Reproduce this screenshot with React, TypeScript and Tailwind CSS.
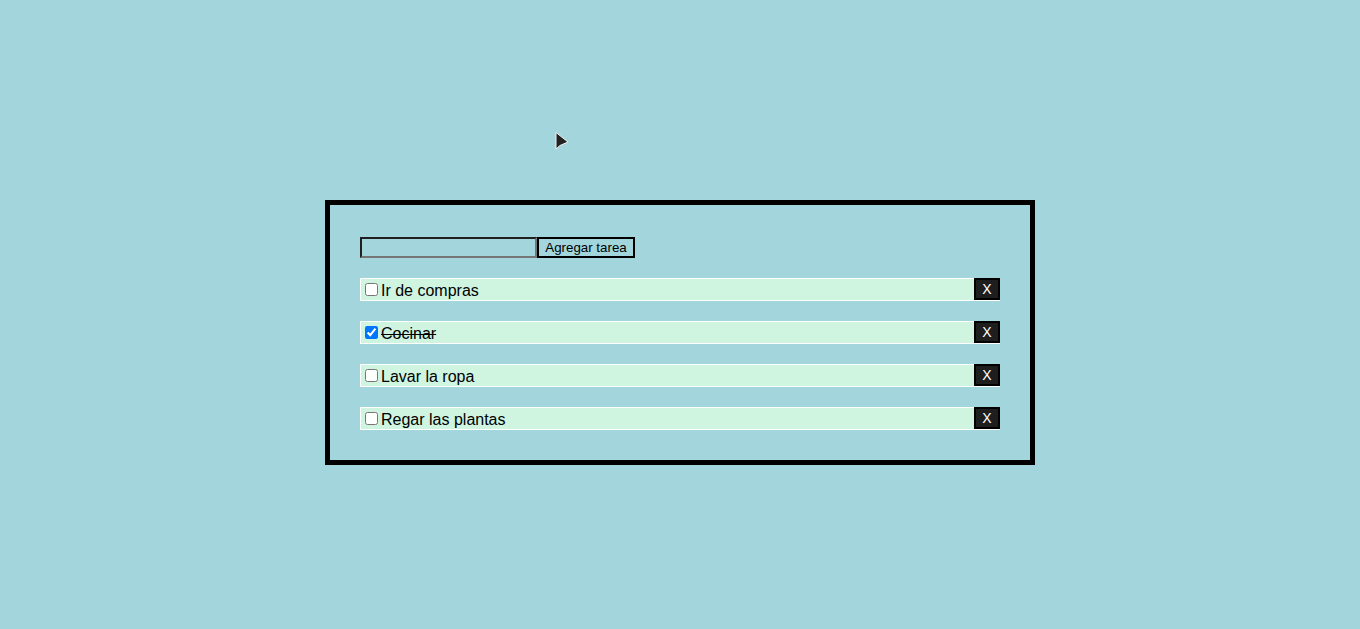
import React, { useState } from "react";

type Task = { id: number; text: string; done: boolean };

const initialTasks: Task[] = [
  { id: 1, text: "Ir de compras", done: false },
  { id: 2, text: "Cocinar", done: true },
  { id: 3, text: "Lavar la ropa", done: false },
  { id: 4, text: "Regar las plantas", done: false },
];

export default function App() {
  const [tasks, setTasks] = useState<Task[]>(initialTasks);
  const [text, setText] = useState("");

  const addTask = () => {
    if (!text.trim()) return;
    setTasks((prev) => [...prev, { id: Date.now(), text: text.trim(), done: false }]);
    setText("");
  };

  const toggle = (id: number) =>
    setTasks((prev) => prev.map((t) => (t.id === id ? { ...t, done: !t.done } : t)));

  const remove = (id: number) => setTasks((prev) => prev.filter((t) => t.id !== id));

  return (
    <div className="relative min-h-screen bg-[#a3d5dc] pt-[200px] font-['Liberation_Sans',Arial,sans-serif]">
      {/* mouse pointer from the screenshot */}
      <svg className="absolute left-[554px] top-[131px]" width="16" height="22" viewBox="0 0 16 22">
        <path d="M2 1.5 L2 18 L6 14.5 L14 11 Z" fill="#222" stroke="#f2f2f2" strokeWidth="1" strokeLinejoin="round" />
      </svg>

      <div className="mx-auto w-[710px] border-[5px] border-black px-[30px] pt-[32px] pb-[30px]">
        {/* add form */}
        <div className="flex h-[21px]">
          <input
            value={text}
            onChange={(e) => setText(e.target.value)}
            className="w-[177px] h-[21px] border-2 border-t-[#1f1f1f] border-l-[#1f1f1f] border-b-[#767676] border-r-[#767676] bg-transparent px-1 text-[13px] outline-none"
          />
          <button
            onClick={addTask}
            className="h-[21px] w-[98px] border-2 border-black bg-transparent text-[13.33px] leading-none text-black"
          >
            Agregar tarea
          </button>
        </div>

        {/* task list */}
        <ul className="mt-[20px] flex flex-col gap-[20px]">
          {tasks.map((t) => (
            <li
              key={t.id}
              className="flex h-[23px] items-center justify-between border border-white bg-[#cff5e1]"
            >
              <label className="flex items-center pl-[3px] text-[16px] text-black">
                <input
                  type="checkbox"
                  checked={t.done}
                  onChange={() => toggle(t.id)}
                  className="m-0 ml-[1px] mr-[3px] h-[13px] w-[13px]"
                />
                <span className={t.done ? "line-through translate-y-[1px]" : "translate-y-[1px]"}>{t.text}</span>
              </label>
              <button
                onClick={() => remove(t.id)}
                className="flex h-[22px] w-[26px] items-center justify-center border-2 border-black bg-[#1e1e1e] text-[14px] leading-none text-white -mr-[1px] -mt-[1px]"
              >
                X
              </button>
            </li>
          ))}
        </ul>
      </div>
    </div>
  );
}
